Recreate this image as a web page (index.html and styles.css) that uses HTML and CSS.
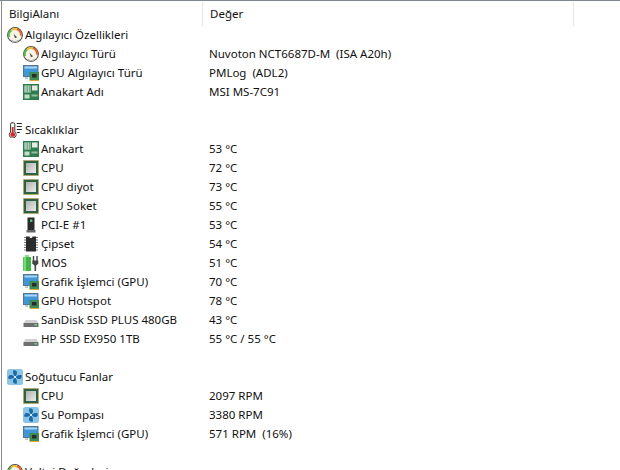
FILE: index.html
```html
<!DOCTYPE html>
<html lang="tr">
<head>
<meta charset="utf-8">
<title>Sensör</title>
<link rel="stylesheet" href="styles.css">
</head>
<body>
<svg class="defs" width="0" height="0" aria-hidden="true">
  <defs>
    <linearGradient id="g-cpu" x1="0" y1="0" x2="1" y2="1">
      <stop offset="0" stop-color="#aeb2ae"/>
      <stop offset="1" stop-color="#ececec"/>
    </linearGradient>
    <symbol id="i-gauge" viewBox="0 0 16 16">
      <circle cx="8" cy="8" r="7.4" fill="#f7f3e6" stroke="#4f4f4f" stroke-width="1.1"/>
      <path d="M2.1 10A6 6 0 0 1 4.4 3.2" fill="none" stroke="#58b848" stroke-width="2"/>
      <path d="M4.4 3.2A6 6 0 0 1 10 2.3" fill="none" stroke="#e8c23c" stroke-width="2"/>
      <path d="M10 2.3A6 6 0 0 1 13.9 8.6" fill="none" stroke="#e2672a" stroke-width="2"/>
      <path d="M6.6 6.8L10 10.2L8 11.2Z" fill="#4a4a4a"/>
      <path d="M4.5 13.2a5 5 0 0 0 7 0" fill="none" stroke="#b5b5b5" stroke-width="1.4"/>
    </symbol>
    <symbol id="i-gpu" viewBox="0 0 16 16">
      <rect x="0.5" y="0.5" width="14.5" height="11" fill="#3f97d8" stroke="#5d7488"/>
      <rect x="1.5" y="1.5" width="12.5" height="2" fill="#a8d6f4"/>
      <path d="M2 12.5h3v1H2Z" fill="#8a9aa8"/>
      <rect x="6.5" y="7" width="9.5" height="8" fill="#3f8a55"/>
      <rect x="9" y="9" width="4.5" height="3.5" fill="#2c2c2c"/>
      <path d="M6.5 15.5h9.5" stroke="#d8a93a"/>
    </symbol>
    <symbol id="i-board" viewBox="0 0 16 16">
      <rect x="0" y="0" width="16" height="16" fill="#2f7d4f"/>
      <rect x="1.5" y="1.5" width="6" height="7" fill="#eef5ee"/>
      <path d="M3 1.5v7M4.7 1.5v7M6.3 1.5v7" stroke="#2f7d4f" stroke-width=".8"/>
      <rect x="9" y="1.5" width="5.5" height="5" fill="#e2eee2"/>
      <rect x="1.5" y="10.5" width="5" height="4" fill="#c8dcc8"/>
      <rect x="8.5" y="10.5" width="6" height="2" fill="#8fc09f"/>
    </symbol>
    <symbol id="i-cpu" viewBox="0 0 16 16">
      <rect x="0.5" y="0.5" width="15" height="15" fill="#2f6b45" stroke="#c9a13f" stroke-dasharray="1 1"/>
      <rect x="1" y="1" width="14" height="14" fill="#2f6244"/>
      <rect x="3" y="3" width="10" height="10" fill="url(#g-cpu)"/>
    </symbol>
    <symbol id="i-pci" viewBox="0 0 16 16">
      <rect x="4.5" y="0.5" width="7" height="13" fill="#2a2a2a"/>
      <rect x="7" y="2.5" width="2.4" height="2.4" fill="#4fd06a"/>
      <rect x="3.5" y="13" width="9" height="2.5" fill="#666"/>
    </symbol>
    <symbol id="i-chip" viewBox="0 0 16 16">
      <path d="M1 1.5h3M1 4h3M1 6.5h3M1 9h3M1 11.5h3M1 14h3M12 1.5h3M12 4h3M12 6.5h3M12 9h3M12 11.5h3M12 14h3" stroke="#777" stroke-width="1"/>
      <path d="M3 0.5h3.5a1.5 1.5 0 0 0 3 0H13v15H3Z" fill="#2b2b2b"/>
    </symbol>
    <symbol id="i-mos" viewBox="0 0 16 16">
      <rect x="0" y="2" width="8" height="14" fill="#3fb643"/>
      <rect x="2" y="0" width="4" height="2" fill="#8ad88a"/>
      <rect x="0.5" y="2" width="2.5" height="14" fill="#7bd87b"/>
      <path d="M10.5 1v5M14 1v5" stroke="#444" stroke-width="1.4"/>
      <path d="M9.3 5.5h6v3l-2 2h-2l-2-2Z" fill="#444"/>
      <path d="M12.3 10v6" stroke="#444" stroke-width="1.6"/>
    </symbol>
    <symbol id="i-disk" viewBox="0 0 16 16">
      <path d="M2.5 8h11l2 3.5H.5Z" fill="#d0d0d0"/>
      <rect x="0.5" y="11" width="15" height="4" rx=".6" fill="#6f6f6f"/>
      <rect x="11.5" y="12" width="2.5" height="1.5" fill="#5fe07a"/>
    </symbol>
    <symbol id="i-temp" viewBox="0 0 16 16">
      <path d="M5 0.8h1.4a1.4 1.4 0 0 1 1.4 1.4V10a3.4 3.4 0 1 1-4.2 0V2.2A1.4 1.4 0 0 1 5 0.8Z" fill="#fff" stroke="#333"/>
      <rect x="4.8" y="5" width="1.8" height="6" fill="#d8242a"/>
      <circle cx="5.7" cy="12.7" r="2.4" fill="#d8242a"/>
      <path d="M9.8 1.5h5M9.8 4.5h5M9.8 7.5h5M9.8 10.5h3" stroke="#222" stroke-width="1.2"/>
    </symbol>
    <symbol id="i-fan" viewBox="0 0 16 16">
      <rect x="0" y="0" width="16" height="16" rx="2.5" fill="#8cc4e6"/>
      <g fill="#1b6aa8">
        <path d="M8 7.5C6 5.5 5.6 3 6.4 1.3C8.4.8 10.4 2 10 4.2C9.8 5.8 9 6.8 8 7.5Z"/>
        <path d="M8.5 8C10.5 6 13 5.6 14.7 6.4C15.2 8.4 14 10.4 11.8 10C10.2 9.8 9.2 9 8.5 8Z"/>
        <path d="M8 8.5C10 10.5 10.4 13 9.6 14.7C7.6 15.2 5.6 14 6 11.8C6.2 10.2 7 9.2 8 8.5Z"/>
        <path d="M7.5 8C5.5 10 3 10.4 1.3 9.6C.8 7.6 2 5.6 4.2 6C5.8 6.2 6.8 7 7.5 8Z"/>
      </g>
      <circle cx="8" cy="8" r="1.1" fill="#f0f7fc"/>
    </symbol>
  </defs>
</svg>

<main class="panel">
  <header class="head">
    <div class="head-cell head-field">BilgiAlanı</div>
    <div class="head-cell head-value">Değer</div>
    <div class="head-cell head-rest"></div>
  </header>

  <div class="row group"><span class="field"><svg class="ico"><use href="#i-gauge"/></svg>Algılayıcı Özellikleri</span></div>
  <div class="row"><span class="field"><svg class="ico"><use href="#i-gauge"/></svg>Algılayıcı Türü</span><span class="value">Nuvoton NCT6687D-M  (ISA A20h)</span></div>
  <div class="row"><span class="field"><svg class="ico"><use href="#i-gpu"/></svg>GPU Algılayıcı Türü</span><span class="value">PMLog  (ADL2)</span></div>
  <div class="row"><span class="field"><svg class="ico"><use href="#i-board"/></svg>Anakart Adı</span><span class="value">MSI MS-7C91</span></div>
  <div class="row blank"></div>

  <div class="row group"><span class="field"><svg class="ico"><use href="#i-temp"/></svg>Sıcaklıklar</span></div>
  <div class="row"><span class="field"><svg class="ico"><use href="#i-board"/></svg>Anakart</span><span class="value">53 °C</span></div>
  <div class="row"><span class="field"><svg class="ico"><use href="#i-cpu"/></svg>CPU</span><span class="value">72 °C</span></div>
  <div class="row"><span class="field"><svg class="ico"><use href="#i-cpu"/></svg>CPU diyot</span><span class="value">73 °C</span></div>
  <div class="row"><span class="field"><svg class="ico"><use href="#i-cpu"/></svg>CPU Soket</span><span class="value">55 °C</span></div>
  <div class="row"><span class="field"><svg class="ico"><use href="#i-pci"/></svg>PCI-E #1</span><span class="value">53 °C</span></div>
  <div class="row"><span class="field"><svg class="ico"><use href="#i-chip"/></svg>Çipset</span><span class="value">54 °C</span></div>
  <div class="row"><span class="field"><svg class="ico"><use href="#i-mos"/></svg>MOS</span><span class="value">51 °C</span></div>
  <div class="row"><span class="field"><svg class="ico"><use href="#i-gpu"/></svg>Grafik İşlemci (GPU)</span><span class="value">70 °C</span></div>
  <div class="row"><span class="field"><svg class="ico"><use href="#i-gpu"/></svg>GPU Hotspot</span><span class="value">78 °C</span></div>
  <div class="row"><span class="field"><svg class="ico"><use href="#i-disk"/></svg>SanDisk SSD PLUS 480GB</span><span class="value">43 °C</span></div>
  <div class="row"><span class="field"><svg class="ico"><use href="#i-disk"/></svg>HP SSD EX950 1TB</span><span class="value">55 °C / 55 °C</span></div>
  <div class="row blank"></div>

  <div class="row group"><span class="field"><svg class="ico"><use href="#i-fan"/></svg>Soğutucu Fanlar</span></div>
  <div class="row"><span class="field"><svg class="ico"><use href="#i-cpu"/></svg>CPU</span><span class="value">2097 RPM</span></div>
  <div class="row"><span class="field"><svg class="ico"><use href="#i-fan"/></svg>Su Pompası</span><span class="value">3380 RPM</span></div>
  <div class="row"><span class="field"><svg class="ico"><use href="#i-gpu"/></svg>Grafik İşlemci (GPU)</span><span class="value">571 RPM  (16%)</span></div>
  <div class="row blank"></div>

  <div class="row group"><span class="field"><svg class="ico"><use href="#i-gauge"/></svg>Voltaj Değerleri</span></div>
</main>
</body>
</html>
```

FILE: styles.css
```css
* { box-sizing: border-box; }
html, body { margin: 0; height: 100%; overflow: hidden; background: #fff; }
body { border-top: 1px solid #7f8890; }
.defs { position: absolute; }
.panel {
  height: 469px;
  margin-left: 1px;
  overflow: hidden;
  border-left: 1px solid #8a8a8a;
  font: 11.5px/18px "Noto Sans", "Open Sans", sans-serif;
  color: #111;
  background: #fff;
}
.head { display: flex; height: 25px; padding-top: 1px; }
.head-cell { height: 24px; line-height: 24px; padding-left: 7px; border-right: 1px solid #e5e5e5; }
.head-field { width: 201px; }
.head-value { width: 371px; }
.head-rest { flex: 1; border-right: 0; }
.row { display: flex; height: 19px; white-space: pre; }
.field { display: flex; align-items: flex-start; width: 207px; padding-left: 21px; flex: none; }
.group .field { padding-left: 5px; }
.ico { width: 16px; height: 16px; margin: 1px 2px 0 0; flex: none; }
```
